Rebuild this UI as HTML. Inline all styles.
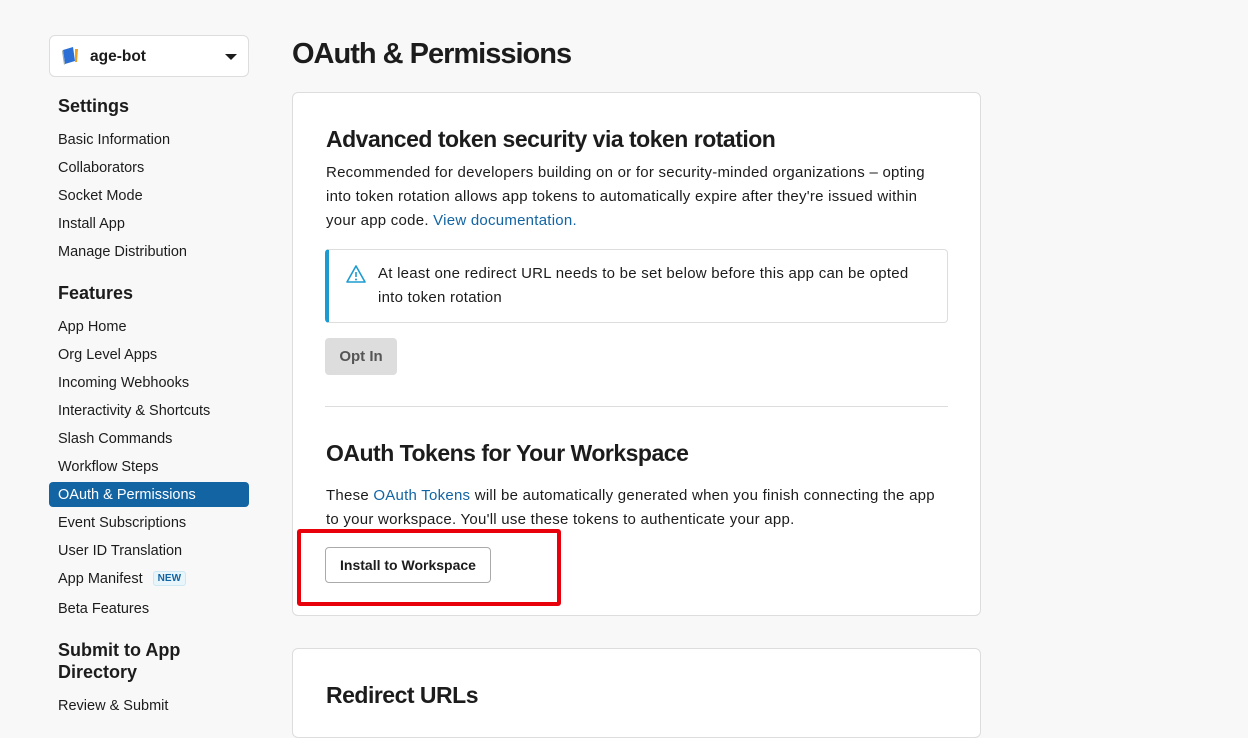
<!DOCTYPE html>
<html><head><style>
*{margin:0;padding:0;box-sizing:border-box}
body{width:1248px;height:721px;overflow:hidden;background:#f8f8f8;font-family:"Liberation Sans",sans-serif;color:#1d1c1d;position:relative}
.abs{position:absolute}
.sel{left:49px;top:35px;width:200px;height:42px;background:#fff;border:1px solid #ddd;border-radius:6px}
.sb{left:58px;font-size:14.5px;color:#1d1c1d;white-space:nowrap}
.sh{left:58px;font-size:18px;font-weight:bold;line-height:22px}
.card{background:#fff;border:1px solid #ddd;border-radius:6px}
p{font-size:15px;line-height:24px;letter-spacing:0.25px}
a{color:#1264a3;text-decoration:none}
h2{position:absolute;font-size:23px;font-weight:bold;letter-spacing:-0.5px;white-space:nowrap}
</style></head><body>
<div class="abs sel">
 <svg class="abs" style="left:11px;top:10px" width="20" height="20" viewBox="0 0 20 20"><path d="M2 4 L12 1 L14 15 L4 18Z" fill="#2b6fd6"/><path d="M2 4 L4 18 L3 19 L1 5Z" fill="#9aa"/><path d="M14 3 L17 3 L16 16 L14 16Z" fill="#f0a020"/></svg>
 <div class="abs" style="left:40px;top:12px;font-size:15.5px;font-weight:bold">age-bot</div>
 <div class="abs" style="left:175px;top:18px;width:0;height:0;border-left:6px solid transparent;border-right:6px solid transparent;border-top:6px solid #1d1c1d"></div>
</div>
<div class="abs sh" style="top:95px">Settings</div>
<div class="abs sb" style="top:132px">Basic Information</div>
<div class="abs sb" style="top:160px">Collaborators</div>
<div class="abs sb" style="top:188px">Socket Mode</div>
<div class="abs sb" style="top:216px">Install App</div>
<div class="abs sb" style="top:244px">Manage Distribution</div>
<div class="abs sh" style="top:282px">Features</div>
<div class="abs sb" style="top:319px">App Home</div>
<div class="abs sb" style="top:347px">Org Level Apps</div>
<div class="abs sb" style="top:375px">Incoming Webhooks</div>
<div class="abs sb" style="top:403px">Interactivity &amp; Shortcuts</div>
<div class="abs sb" style="top:431px">Slash Commands</div>
<div class="abs sb" style="top:459px">Workflow Steps</div>
<div class="abs" style="left:49px;top:482px;width:200px;height:25px;background:#1264a3;border-radius:4px"></div>
<div class="abs sb" style="top:487px;color:#fff">OAuth &amp; Permissions</div>
<div class="abs sb" style="top:515px">Event Subscriptions</div>
<div class="abs sb" style="top:543px">User ID Translation</div>
<div class="abs sb" style="top:571px">App Manifest <span style="display:inline-block;margin-left:6px;font-size:10px;font-weight:bold;color:#1264a3;background:#e8f5fa;border:1px solid #cde7f3;border-radius:3px;padding:1px 4px;vertical-align:2px">NEW</span></div>
<div class="abs sb" style="top:601px">Beta Features</div>
<div class="abs sh" style="top:639px">Submit to App<br>Directory</div>
<div class="abs sb" style="top:698px">Review &amp; Submit</div>

<div class="abs" style="left:292px;top:38px;font-size:29px;font-weight:bold;letter-spacing:-1px">OAuth &amp; Permissions</div>

<div class="abs card" style="left:292px;top:92px;width:689px;height:524px">
 <h2 style="left:33px;top:33px">Advanced token security via token rotation</h2>
 <p class="abs" style="left:33px;top:68px;width:625px">Recommended for developers building on or for security-minded organizations – opting into token rotation allows app tokens to automatically expire after they're issued within your app code. <a>View documentation.</a></p>
 <div class="abs" style="left:32px;top:156px;width:623px;height:74px;border:1px solid #ddd;border-left:4px solid #1d9bd1;border-radius:4px">
  <svg class="abs" style="left:16px;top:14px" width="22" height="20" viewBox="0 0 22 20"><path d="M11 2 L20 18 L2 18Z" fill="none" stroke="#1d9bd1" stroke-width="1.6" stroke-linejoin="round"/><path d="M11 8 V13" stroke="#1d9bd1" stroke-width="1.6"/><circle cx="11" cy="15.5" r="1" fill="#1d9bd1"/></svg>
  <p class="abs" style="left:49px;top:12px;width:545px">At least one redirect URL needs to be set below before this app can be opted into token rotation</p>
 </div>
 <div class="abs" style="left:32px;top:245px;width:72px;height:37px;background:#ddd;border-radius:4px;font-size:15px;font-weight:bold;color:#555;text-align:center;line-height:37px">Opt In</div>
 <div class="abs" style="left:32px;top:313px;width:623px;height:1px;background:#ddd"></div>
 <h2 style="left:33px;top:347px">OAuth Tokens for Your Workspace</h2>
 <p class="abs" style="left:33px;top:391px;width:625px">These <a>OAuth Tokens</a> will be automatically generated when you finish connecting the app to your workspace. You'll use these tokens to authenticate your app.</p>
 <div class="abs" style="left:32px;top:454px;width:166px;height:36px;border:1px solid #aaa;border-radius:4px;font-size:14px;font-weight:bold;text-align:center;line-height:34px">Install to Workspace</div>
</div>
<div class="abs" style="left:297px;top:529px;width:264px;height:77px;border:4px solid #e8000b;border-radius:3px"></div>

<div class="abs card" style="left:292px;top:648px;width:689px;height:90px">
 <h2 style="left:33px;top:33px">Redirect URLs</h2>
</div>
</body></html>
